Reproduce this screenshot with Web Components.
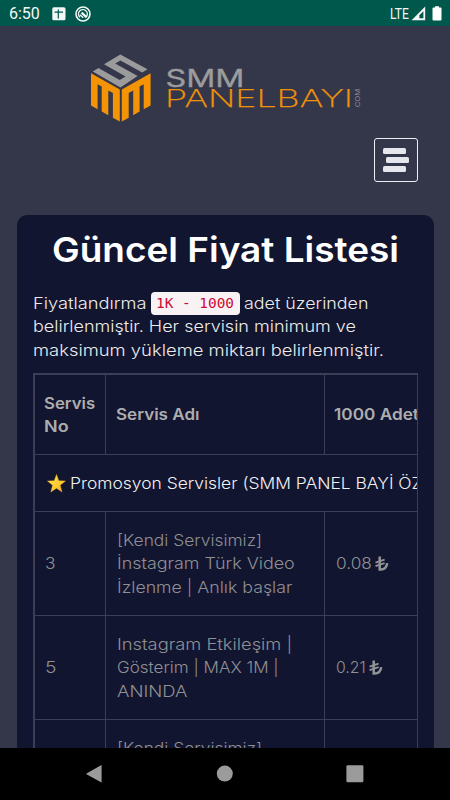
<!DOCTYPE html>
<html lang="tr"><head><meta charset="utf-8"><title>Güncel Fiyat Listesi</title>
<style>
html,body{margin:0;height:800px;overflow:hidden;background:#34364a;font-family:Inter,"Noto Sans",sans-serif}
</style></head><body>
<phone-screen>
<status-bar slot="status"></status-bar>
<site-header></site-header>
<price-card>
<fit-text slot="title" w="347">Güncel Fiyat Listesi</fit-text>
<text-line slot="intro"><fit-text w="113">Fiyatlandırma</fit-text><code-pill>1K - 1000</code-pill><fit-text w="125">adet üzerinden</fit-text></text-line>
<text-line slot="intro"><fit-text w="323">belirlenmiştir. Her servisin minimum ve</fit-text></text-line>
<text-line slot="intro"><fit-text w="351">maksimum yükleme miktarı belirlenmiştir.</fit-text></text-line>
<price-row kind="head"><fit-text slot="no" w="51">Servis</fit-text><fit-text slot="no" w="25">No</fit-text><fit-text slot="name" w="83">Servis Adı</fit-text><fit-text slot="price" w="85">1000 Adet</fit-text></price-row>
<group-row><fit-text w="352">Promosyon Servisler (SMM PANEL BAYİ ÖZ</fit-text></group-row>
<price-row kind="item"><fit-text slot="no" w="11">3</fit-text><fit-text slot="name" w="145">[Kendi Servisimiz]</fit-text><fit-text slot="name" w="178">İnstagram Türk Video</fit-text><fit-text slot="name" w="175">İzlenme | Anlık başlar</fit-text><fit-text slot="price" w="36">0.08</fit-text><lira-icon slot="price"></lira-icon></price-row>
<price-row kind="item"><fit-text slot="no" w="11">5</fit-text><fit-text slot="name" w="175">Instagram Etkileşim |</fit-text><fit-text slot="name" w="162">Gösterim | MAX 1M |</fit-text><fit-text slot="name" w="70">ANINDA</fit-text><fit-text slot="price" w="30">0.21</fit-text><lira-icon slot="price"></lira-icon></price-row>
<price-row kind="item"><fit-text slot="name" w="145">[Kendi Servisimiz]</fit-text><fit-text slot="name" w="0"></fit-text><fit-text slot="name" w="0"></fit-text></price-row>
</price-card>
<nav-bar slot="nav"></nav-bar>
</phone-screen>
<script>
const define=(name,html,ready)=>customElements.define(name,class extends HTMLElement{
  constructor(){super();this.attachShadow({mode:'open'}).innerHTML=html;}
  connectedCallback(){if(ready)ready(this,this.shadowRoot);}
});

define('phone-screen',`<style>:host{display:grid;grid-template-rows:26px 722px 52px;width:450px;height:800px;overflow:hidden;background:#34364a}main{overflow:hidden;min-height:0}</style>
<slot name="status"></slot><main><slot></slot></main><slot name="nav"></slot>`);

define('status-bar',`<style>:host{display:flex;align-items:center;box-sizing:border-box;height:26px;padding:1px 8px 0 9px;background:#00574b;color:#f4f7f6;font:16px/20px Roboto,sans-serif}
.time{width:43px}.space{flex:1}.lte{font-size:14px;width:21px;transform:scaleX(.86);transform-origin:0 0}svg{display:block}.app{margin-right:9px}.sig{margin-right:6px}</style>
<span class="time">6:50</span>
<svg class="app" width="14" height="14" viewBox="0 0 14 14"><rect x=".3" y=".3" width="13.2" height="13" rx="1.6" fill="#f4f7f6"/><path d="M2.5 5.2h8.5M6.3 2.5v9" stroke="#00574b" stroke-width="1.2"/></svg>
<svg width="16" height="16" viewBox="0 0 16 16" fill="none" stroke="#f4f7f6"><circle cx="8" cy="8" r="7" stroke-width="1.6"/><path d="M4.9 11.2A4.4 4.4 0 1 1 11.6 10.4" stroke-width="1.4"/><path d="M6.6 6.6 11.6 11.4" stroke-width="2.2"/><path d="M5 8.8l3.2 3" stroke-width="1.3"/></svg>
<span class="space"></span><span class="lte">LTE</span>
<svg class="sig" width="15" height="15" viewBox="0 0 15 15"><path d="M14.2.6v13.6H.6z" fill="#f4f7f6"/><path d="M12.4 5.2v7.1H8.4V9.3z" fill="#00574b"/></svg>
<svg width="10" height="15" viewBox="0 0 10 15"><path d="M1.5 1.5H3V.2h4v1.3h1.5q1 0 1 1v11q0 1-1 1h-7q-1 0-1-1v-11q0-1 1-1z" fill="#fff"/></svg>`);

define('site-header',`<style>:host{display:flex;flex-direction:column;height:189px;box-sizing:border-box;padding-top:26px}
.brand{display:block;margin-left:88px}
button{all:unset;box-sizing:border-box;width:44px;height:44px;margin:12px 32px 0 auto;border:1.5px solid #eceef2;border-radius:3px;display:flex;flex-direction:column;gap:2.7px;justify-content:center;align-items:flex-start;padding-left:7.5px}
i{width:23.5px;height:6px;border-radius:1.5px;background:#e6e7ec}i:nth-child(2){margin-left:3.3px}</style>
<svg class="brand" width="280" height="74" viewBox="88 52 280 74" font-family="Inter,sans-serif">
<path d="M120.3 54.5 147.5 69.2 142.2 72.4 120.4 60.5 115.2 63.6 137.6 76 120.4 87.4 92.8 71.5 98.4 68 119.7 80 125.6 76.4 104 64.3Z" fill="#9b9b9b"/>
<path d="M91 73.2 119.8 89.6V121.6L112.9 117.7V93L108.3 90.4V115.3L101.7 111.5V86.5L97.6 84.2V109.3L91 105.5ZM150.6 73.2 121.8 89.6V121.6L128.7 117.7V93L133.2 90.4V115.3L139.6 111.5V86.5L143.7 84.2V109.3L150.6 105.5Z" fill="#f49405"/>
<text x="165.5" y="86.5" font-size="23.6" font-weight="400" fill="#9c9c9c" stroke="#9c9c9c" stroke-width=".3" textLength="79" lengthAdjust="spacingAndGlyphs">SMM</text>
<text x="165" y="107" font-size="23.6" font-weight="200" fill="#ef9208" stroke="#ef9208" stroke-width=".25" textLength="188" lengthAdjust="spacingAndGlyphs">PANELBAYI</text>
<text transform="translate(359.6 107.3) rotate(-90)" font-size="6.3" fill="#92939b" textLength="18.5" lengthAdjust="spacingAndGlyphs">COM</text>
</svg><button aria-label="Menü"><i></i><i></i><i></i></button>`);

define('price-card',`<style>:host{display:block;box-sizing:border-box;height:640px;margin-left:16.5px;width:417.5px;border-radius:10px;background:#121530;padding:0 16.5px;overflow:hidden}
h1{margin:0;padding:12px 0 0;height:64px;box-sizing:border-box;text-align:center;color:#fff;font-size:34.5px;line-height:46px;font-weight:600}
.intro{height:94px;padding-top:12.6px;box-sizing:border-box;color:#edecea;font-size:16px;font-weight:350;line-height:23.5px}
.table{width:384.5px;height:420px;box-sizing:border-box;border:2px solid #3c3e56;border-right-width:1px;overflow:hidden}</style>
<h1><slot name="title"></slot></h1><div class="intro"><slot name="intro"></slot></div><div class="table"><slot></slot></div>`);

define('text-line',`<style>:host{display:flex;height:23.5px;white-space:nowrap}</style><slot></slot>`);
define('code-pill',`<style>:host{box-sizing:border-box;width:89px;height:23px;margin:.4px 4px 0 4.5px;border-radius:4px;background:#f9f2f4;color:#ce0a34;display:flex;justify-content:center;align-items:center;font:400 14.4px/22px "DejaVu Sans Mono",monospace;white-space:pre}</style><slot></slot>`);

define('price-row',`<style>:host{display:grid;grid-template-columns:70px 218.5px 93px;height:104px;box-sizing:border-box;border-bottom:1px solid #3c3e56;color:#8f9093;font-size:15.8px;line-height:23.5px;font-weight:300}
:host([kind=head]){height:79.5px;color:#adadae;font-weight:600}
div{display:flex;flex-direction:column;justify-content:center;align-items:flex-start;padding:2px 0 0 10.5px;border-left:1px solid #3c3e56;overflow:hidden;min-width:0}
.no{border-left:0;padding-left:9.5px}.price{flex-direction:row;justify-content:flex-start;align-items:center;padding-left:11.5px}
:host([kind=head]) .no{padding-left:9px}:host([kind=head]) .name{padding-top:0;padding-left:9.5px}:host([kind=head]) .price{padding-top:0;padding-left:9px}</style>
<div class="no"><slot name="no"></slot></div><div class="name"><slot name="name"></slot></div><div class="price"><slot name="price"></slot></div>`);

define('group-row',`<style>:host{display:flex;align-items:center;height:57px;box-sizing:border-box;border-bottom:1px solid #3c3e56;padding:2px 0 0 11.5px;color:#f1f1ef;font-size:15.8px;line-height:23.5px;font-weight:350}svg{flex:none;margin-right:4.5px}</style>
<svg width="19" height="19" viewBox="0 0 19 19"><defs><linearGradient id="g" x2="1" y2="1"><stop stop-color="#ffe24a"/><stop offset=".6" stop-color="#fcca30"/><stop offset="1" stop-color="#ef9b24"/></linearGradient></defs><path d="M9.5.5 11.8 6.7 18.5 7 13.2 11.2 15 18 9.5 14.2 3.8 18 5.6 11.2.4 7 7.2 6.7Z" fill="url(#g)" stroke="#f2b52b" stroke-width=".4" stroke-linejoin="round"/></svg><slot></slot>`);

define('lira-icon',`<style>:host{display:block;margin-left:3px}svg{display:block}</style>
<svg width="14" height="16" viewBox="0 0 14 16" fill="none" stroke="#929397"><path d="M4.7.4V13.6H5.6Q11.5 13.5 12.2 7.2" stroke-width="2.5"/><path d="M.5 6.7 9.6 3.7M.5 10.1 9.6 7.1" stroke-width="1.9"/></svg>`);

define('nav-bar',`<style>:host{display:flex;justify-content:space-between;align-items:center;height:52px;box-sizing:border-box;background:#000;padding:0 86.5px 0 85px}svg{display:block}</style>
<svg width="18" height="20"><path d="M16.6 1.2v17.2Q16.6 18.7 16 18.3L1.5 10.2Q1 9.8 1.5 9.4L16 1.2Q16.6.8 16.6 1.2z" fill="#9b9b9b"/></svg>
<svg width="18" height="20"><circle cx="9.8" cy="9.6" r="8" fill="#9b9b9b"/></svg>
<svg width="18" height="20"><rect x=".4" y="1.2" width="17" height="17" rx="1.2" fill="#9b9b9b"/></svg>`);

/* Stretches one line of text to the width given in its "w" attribute. */
define('fit-text',`<style>:host{display:inline-block;flex:none;white-space:nowrap;min-height:1em;text-align:left}span{display:inline-block;transform-origin:0 50%}</style><span><slot></slot></span>`,(el,root)=>{
  const w=+el.getAttribute('w'),s=root.querySelector('span');
  if(!w){el.style.height='23.5px';return;}
  el.style.width=w+'px';
  s.style.transform='scaleX('+w/s.offsetWidth+')';
});
</script></body></html></script>
